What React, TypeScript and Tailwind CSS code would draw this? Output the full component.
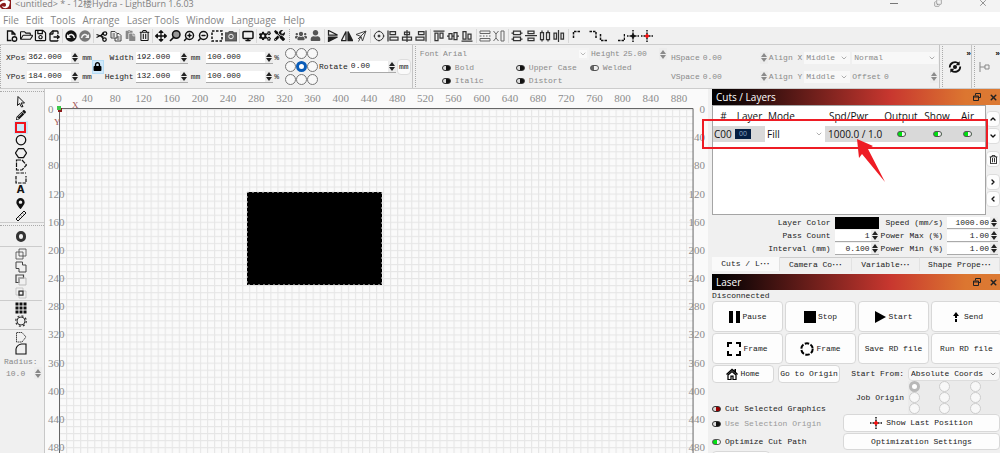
import { useState } from "react";
import type { ReactNode } from "react";
import { Camera, ChevronDown, ChevronLeft, ChevronRight, ChevronUp, Copy, FileOutput, Monitor, X, ZoomIn, ZoomOut } from "lucide-react";
import { FaCogs, FaLock, FaMapMarkerAlt, FaPaste, FaRegFolderOpen, FaRegSave, FaRegTrashAlt, FaTools, FaUser, FaUsers, FaArrowsAlt, FaPencilAlt } from "react-icons/fa";

const UI = "font-['Open_Sans','Noto_Sans_CJK_SC',sans-serif]";

interface Tool {
  label: string;
  icon: ReactNode;
}

// Small line icon on a 24 unit grid
function Line({ d, w = 2.5, color = "currentColor", dash, children }: { d: string; w?: number; color?: string; dash?: string; children?: ReactNode }) {
  return (
    <svg viewBox="0 0 24 24" className="size-3" fill="none" stroke={color} strokeWidth={w} strokeDasharray={dash}>
      <path d={d} />
      {children}
    </svg>
  );
}

function Cross({ dot, size = "size-3" }: { dot: string; size?: string }) {
  return (
    <svg viewBox="0 0 24 24" className={size} fill="none" stroke="#111" strokeWidth="3">
      <path d="M12 0v3M12 5v4M12 15v4M12 21v3M0 12h3M5 12h4M15 12h4M21 12h3" />
      <circle cx="12" cy="12" r="3" fill={dot} stroke={dot} strokeWidth="2" />
    </svg>
  );
}

const disc = (color: string, flip: boolean) => (
  <svg viewBox="0 0 24 24" className="size-3">
    <circle cx="12" cy="12" r="11.5" fill={color} />
    <g fill="none" stroke="#f0f0f0" strokeWidth="3" transform={flip ? "translate(24 0) scale(-1 1)" : undefined}>
      <path d="M7 12c3-5 10-4 12 4" />
      <path d="M4 8v8h8z" fill="#f0f0f0" stroke="none" />
    </g>
  </svg>
);

const fileTools: Tool[][] = [
  [
    {
      label: "New",
      icon: (
        <Line d="M11 21H3V2h9l6 6v3M12 2v6h6" w={2.6}>
          <circle cx="17" cy="18" r="4.500" />
        </Line>
      ),
    },
    { label: "Open", icon: <FaRegFolderOpen size={13} /> },
    { label: "Save", icon: <FaRegSave size={13} /> },
    { label: "Import", icon: <FileOutput size={12} strokeWidth={2.6} className="-scale-x-100" /> },
  ],
  [
    { label: "Undo", icon: disc("#111", false) },
    { label: "Redo", icon: disc("#777", true) },
  ],
  [
    {
      label: "Cut",
      icon: (
        <Line d="M1 9l14 5M1 15L15 8M8 12h4">
          <path d="M11 13l4 5M11 11l3-6" />
          <circle cx="18" cy="7" r="3.500" />
          <circle cx="17" cy="19" r="3.500" />
        </Line>
      ),
    },
    { label: "Copy", icon: <Line d="M2 3h8l4 4v9H2zM10 16v6h12V11l-4-4h-4M5 8h5M5 12h5M14 14h5M14 18h5" w={2} color="#444" /> },
    { label: "Paste", icon: <FaPaste size={11} className="text-[#888]" /> },
    { label: "Delete", icon: <FaRegTrashAlt size={11} /> },
  ],
  [
    { label: "Pan", icon: <FaArrowsAlt size={12} /> },
    {
      label: "Zoom to page",
      icon: (
        <Line d="M10 14L2 22" w={3.5}>
          <circle cx="14.500" cy="9" r="7.500" fill="#999" strokeWidth="3" />
        </Line>
      ),
    },
    { label: "Zoom in", icon: <ZoomIn size={12} strokeWidth={3} className="-scale-x-100" /> },
    { label: "Zoom out", icon: <ZoomOut size={12} strokeWidth={3} className="-scale-x-100" /> },
    { label: "Frame selection", icon: <Line d="M2 2h20v20H2z" w={3} dash="5 3" /> },
    {
      label: "Camera",
      icon: (
        <Line d="M1 6h6l2-3h6l2 3h6v15H1z" color="#555">
          <path d="M1 6h6l2-3h6l2 3h6v15H1z" fill="#666" />
          <circle cx="12" cy="13" r="4.500" stroke="#eee" strokeWidth="2" />
        </Line>
      ),
    },
  ],
  [{ label: "Preview", icon: <Monitor size={12} strokeWidth={3} /> }],
  [
    { label: "Settings", icon: <FaCogs size={12} /> },
    { label: "Device settings", icon: <FaTools size={11} /> },
  ],
];

const arrangeTools: Tool[][] = [
  [
    { label: "Group", icon: <FaUsers size={12} className="text-[#555]" /> },
    { label: "Ungroup", icon: <FaUser size={11} className="text-[#555]" /> },
  ],
  [
    {
      label: "Flip vertical",
      icon: (
        <Line d="M3 1l18 9H3z" color="#222">
          <path d="M3 23l18-9H3z" fill="#222" />
        </Line>
      ),
    },
    {
      label: "Flip horizontal",
      icon: (
        <Line d="M10 3v18H1z" color="#222">
          <path d="M14 3v18h9z" fill="#222" />
        </Line>
      ),
    },
    { label: "Mirror", icon: <Line d="M2 9L22 2 15 22l-3-9zM22 2L6 18M12 13L7 23" w={2} color="#444" /> },
  ],
  [
    {
      label: "Align centers",
      icon: (
        <Line d="M12 1v3M12 20v3M1 12h3M20 12h3" w={2} color="#333">
          <circle cx="12" cy="12" r="9" />
          <circle cx="12" cy="12" r="2" fill="#333" />
        </Line>
      ),
    },
    { label: "Align left", icon: <Line d="M2 1v22M6 3h11v6H6zM6 14h16v6H6z" color="#333" /> },
    { label: "Align center", icon: <Line d="M12 0v24M7 4h10v5H7zM3 14h18v6H3z" color="#333" /> },
    { label: "Align right", icon: <Line d="M22 1v22M7 3h11v6H7zM2 14h16v6H2z" color="#333" /> },
  ],
  [
    { label: "Align top", icon: <Line d="M1 2h22M4 6h6v15H4zM14 6h6v10h-6z" color="#333" /> },
    { label: "Align middle", icon: <Line d="M0 12h4M10 12h4M20 12h4M4 7h6v11H4zM14 5h6v14h-6z" color="#333" /> },
    { label: "Align bottom", icon: <Line d="M1 22h22M4 3h6v15H4zM14 8h6v10h-6z" color="#333" /> },
  ],
  [
    { label: "Same width", icon: <Line d="M2 2h20v5H2zM2 17h20v5H2zM1 12h4M8 12h3M14 12h3M20 12h3" w={2} color="#666" /> },
    { label: "Same height", icon: <Line d="M1 2l5 6 5-6M1 22l5-6 5 6M6 8v8M16 2h6v20h-6z" w={2} color="#666" /> },
  ],
  [
    { label: "Distribute vertical", icon: <Line d="M1 6h4M19 6h4M5 2h14v7H5zM1 18h4M19 18h4M5 14h14v7H5z" color="#333" /> },
    { label: "Space vertical", icon: <Line d="M0 11h24M6 2h12v5H6zM6 16h12v5H6z" color="#333" /> },
    { label: "Distribute horizontal", icon: <Line d="M6 1v4M6 19v4M3 5h6v14H3zM18 1v4M18 19v4M15 5h6v14h-6z" color="#333" /> },
    { label: "Space horizontal", icon: <Line d="M11 0v24M2 6h5v12H2zM16 6h5v12h-5z" color="#333" /> },
  ],
  [
    { label: "Move to top left", icon: <Line d="M5 16V3h15" w={3} dash="5 2" /> },
    { label: "Move to top right", icon: <Line d="M9 3h13v14" w={3} dash="5 2" /> },
    { label: "Move to bottom left", icon: <Line d="M3 8v13h14" w={3} dash="5 2" /> },
    { label: "Move to bottom right", icon: <Line d="M23 8v13H9" w={3} dash="5 2" /> },
    { label: "Move to center", icon: <Cross dot="#111" /> },
    { label: "Move laser to center", icon: <Cross dot="#f01010" /> },
  ],
];

const drawTools: Tool[] = [
  { label: "Select", icon: <Line d="M6 1l13 13h-7l4 7-3 1-4-7-4 4z" w={2} /> },
  { label: "Draw lines", icon: <FaPencilAlt size={10} /> },
  { label: "Rectangle", icon: <span className="block size-[11px] border-2 border-[#f0141e] bg-[#cce8f8]" /> },
  {
    label: "Ellipse",
    icon: (
      <Line d="">
        <circle cx="12" cy="12" r="9.500" />
      </Line>
    ),
  },
  { label: "Polygon", icon: <Line d="M7 3h10l6 9-6 9H7l-6-9z" /> },
  { label: "Edit nodes", icon: <Line d="M3 2h11l9 10-9 10H3z" w={2.4} dash="9 2" /> },
  { label: "Edit tabs", icon: <Line d="M2 8v14h20V8M2 2h20" w={2.4} dash="7 2" /> },
  { label: "Text", icon: <span className="font-['DejaVu_Sans',sans-serif] text-[10px] font-bold">A</span> },
  { label: "Position laser", icon: <FaMapMarkerAlt size={11} /> },
  { label: "Measure", icon: <Line d="M2 18L18 2l4 4L6 22zM8 15l2 2M12 11l2 2M16 7l2 2" w={2} /> },
];

const booleanTools: Tool[] = [
  { label: "Weld", icon: <Line d="M8 2h14v14h-6v6H2V8h6zM8 8h8v8H8z" w={1.6} color="#444" /> },
  { label: "Union", icon: <Line d="M2 2h13v6h7v14H8v-7H2z" w={2} color="#444" /> },
  {
    label: "Subtract",
    icon: (
      <Line d="M2 2h15v6H8v9H2z" w={2.4} color="#444">
        <path d="M8 8h14v14H8z" stroke="#bbb" strokeWidth="2" />
      </Line>
    ),
  },
  {
    label: "Intersection",
    icon: (
      <Line d="M2 2h14v14H2zM8 8h14v14H8z" w={1.6} color="#bbb">
        <path d="M8 8h8v8H8z" stroke="#333" strokeWidth="2.500" />
      </Line>
    ),
  },
];

const arrayTools: Tool[] = [
  { label: "Grid array", icon: <Line d="M1 4h6M9 4h6M17 4h6M1 12h6M9 12h6M17 12h6M1 20h6M9 20h6M17 20h6" w={6} /> },
  {
    label: "Circular array",
    icon: (
      <Line d="" color="#333">
        <circle cx="12" cy="12" r="8" strokeWidth="2" />
        <circle cx="12" cy="12" r="10.500" strokeWidth="2.500" strokeDasharray="4 4.200" />
      </Line>
    ),
  },
];

const cornerTools: Tool[] = [
  { label: "Start point", icon: <Line d="M3 22V3h11l8 9-8 10z" w={2} dash="3 1" color="#444" /> },
  { label: "Radius tool", icon: <Line d="M2 22V12C3 6 8 3 13 2h9v20z" w={2.2} /> },
];

function ToolButton({ tool, className = "h-3.5 w-3.5" }: { tool: Tool; className?: string }) {
  return (
    <button aria-label={tool.label} className={`flex shrink-0 items-center justify-center ${className}`}>
      {tool.icon}
    </button>
  );
}

function ToolGroups({ groups, sep = "ml-px" }: { groups: Tool[][]; sep?: string }) {
  return groups.map((group, i) => (
    <div key={i} className={`flex items-center ${i > 0 ? `border-l border-[#d8d8d8] pl-px ${sep}` : ""}`}>
      {group.map((tool) => (
        <ToolButton key={tool.label} tool={tool} />
      ))}
    </div>
  ));
}

function Grip() {
  return <div className="w-px shrink-0 self-stretch border-l border-dotted border-[#aaa]" />;
}

function Spinner() {
  return (
    <span className="flex w-2 shrink-0 flex-col items-center justify-center gap-px bg-[#ececec]">
      <button aria-label="Increase" className="h-0 w-0 border-x-[3px] border-b-[4px] border-x-transparent border-b-current" />
      <button aria-label="Decrease" className="h-0 w-0 border-x-[3px] border-t-[4px] border-x-transparent border-t-current" />
    </span>
  );
}

interface FieldProps {
  label: string;
  value: string;
  className?: string;
  align?: string;
  muted?: boolean;
  hideLabel?: boolean;
}

function Field({ label, value, className = "w-[52px]", align = "", muted, hideLabel }: FieldProps) {
  return (
    <label className="flex items-center justify-end gap-0.5">
      {!hideLabel && <span className="whitespace-nowrap">{label}</span>}
      <span className={`flex h-3 ${muted ? "" : "border-b border-[#aaa] bg-white"} ${className}`}>
        <input aria-label={label} defaultValue={value} disabled={muted} className={`min-w-0 flex-1 bg-transparent px-px ${align}`} />
        <Spinner />
      </span>
    </label>
  );
}

function Dropdown({ label, options, className, icon = "text-[#888]" }: { label: string; options: string[]; className: string; icon?: string }) {
  return (
    <span className={`relative flex items-center ${className}`}>
      <select aria-label={label} className="h-full w-full appearance-none px-0.5">
        {options.map((o) => (
          <option key={o}>{o}</option>
        ))}
      </select>
      <ChevronDown size={8} className={`pointer-events-none absolute right-0.5 ${icon}`} />
    </span>
  );
}

const toggleFill = {
  on: "border-[#555] bg-[linear-gradient(90deg,#00e010_55%,#f4f4f4_55%)]",
  off: "border-[#333] bg-[linear-gradient(90deg,#ddd_45%,#111_45%)]",
  red: "border-[#333] bg-[linear-gradient(90deg,#ddd_45%,#900_45%)]",
  hollow: "border-[#555] bg-[linear-gradient(90deg,#666_45%,#eee_45%)]",
};

function Toggle({ label, look, showLabel = true, className = "" }: { label: string; look: keyof typeof toggleFill; showLabel?: boolean; className?: string }) {
  return (
    <label className={`flex items-center gap-1 whitespace-nowrap ${className}`}>
      <input type="checkbox" aria-label={label} defaultChecked={look === "on"} className={`h-1.5 w-[9px] shrink-0 appearance-none rounded-[3px] border ${toggleFill[look]}`} />
      {showLabel && <span>{label}</span>}
    </label>
  );
}

function AnchorGrid({ name, selected, className, dot }: { name: string; selected: number; className: string; dot: string }) {
  return (
    <div role="radiogroup" aria-label={name} className={`grid grid-cols-3 ${className}`}>
      {Array.from({ length: 9 }, (_, i) => (
        <input key={i} type="radio" name={name} aria-label={`${name} ${i + 1}`} defaultChecked={i === selected} className={`size-[11px] appearance-none rounded-full border bg-[#f8f8f8] checked:border-[3px] checked:bg-white ${dot}`} />
      ))}
    </div>
  );
}

function PropertiesBar() {
  return (
    <div className="flex h-[45px] shrink-0 items-stretch overflow-hidden border-y border-[#ccc] bg-[#f0f0f0] text-[#222]">
      <Grip />
      <div className="flex shrink-0 flex-col justify-center gap-[7px] pl-[5px] pt-px">
        <div className="flex items-center gap-[3px]"><Field label="XPos" value="362.000" /><span>mm</span></div>
        <div className="flex items-center gap-[3px]"><Field label="YPos" value="184.000" /><span>mm</span></div>
      </div>
      <button aria-label="Lock aspect ratio" className="flex h-3.5 w-3 shrink-0 items-center justify-center self-center border border-[#b5dcf5] bg-[#cfe8fa] text-black">
        <FaLock size={9} />
      </button>
      <div className="flex shrink-0 flex-col items-end justify-center gap-[7px] pl-px pt-px">
        <div className="flex items-center gap-[3px]"><Field label="Width" value="192.000" /><span>mm</span></div>
        <div className="flex items-center gap-[3px]"><Field label="Height" value="132.000" /><span>mm</span></div>
      </div>
      <div className="flex shrink-0 flex-col justify-center gap-[7px] pl-1.5 pt-px">
        <div className="flex items-center gap-px"><Field label="Width percent" hideLabel value="100.000" className="w-[67px]" /><span>%</span></div>
        <div className="flex items-center gap-px"><Field label="Height percent" hideLabel value="100.000" className="w-[67px]" /><span>%</span></div>
      </div>
      <AnchorGrid name="Anchor" selected={4} className="ml-1.5 shrink-0 content-center gap-y-[2px]" dot="border-[#777] checked:border-[#0a5cb8]" />
      <div className="ml-px flex shrink-0 items-center gap-px">
        <Field label="Rotate" value="0.00" className="w-[46px]" />
        <button className="h-4 w-3.5 rounded-sm border border-[#ddd] bg-[#fafafa]">mm</button>
      </div>
      <div className="ml-px w-px shrink-0 bg-[#c4c4c4]" />
      <div className="ml-0.5 flex shrink-0 py-px"><Grip /></div>

      {/* Text options, greyed out while no text is selected */}
      <div className="flex shrink-0 flex-col pl-1 pt-[3px] text-[#8a8a8a]">
        <div className="flex h-3 items-center gap-0.5">
          <span>Font</span>
          <Dropdown label="Font" options={["Arial"]} className="h-3 w-[148px] bg-[#f3f3f3]" icon="bg-[#fafafa] text-[#999]" />
          <Field label="Height" value="25.00" muted className="w-[45px]" />
        </div>
        <div className="mt-0.5 grid grid-cols-[74px_74px_1fr] gap-y-px pl-[22px]">
          <Toggle label="Bold" look="off" />
          <Toggle label="Upper Case" look="off" />
          <Toggle label="Welded" look="hollow" />
          <Toggle label="Italic" look="off" />
          <Toggle label="Distort" look="off" />
        </div>
      </div>
      <div className="ml-1 flex shrink-0 flex-col justify-center gap-[7px] pt-px text-[#8a8a8a]">
        <Field label="HSpace" value="0.00" muted className="w-[66px]" />
        <Field label="VSpace" value="0.00" muted className="w-[66px]" />
      </div>
      <div className="ml-px flex min-w-0 flex-1 flex-col justify-center gap-[7px] pt-px text-[#8a8a8a]">
        <div className="flex items-center gap-0.5">
          <span className="whitespace-nowrap">Align X</span>
          <Dropdown label="Align X" options={["Middle"]} className="h-3 w-[46px] bg-[#f8f8f8]" />
          <Dropdown label="Style" options={["Normal"]} className="h-3 min-w-0 flex-1 bg-[#f8f8f8]" />
        </div>
        <div className="flex items-center gap-0.5">
          <span className="whitespace-nowrap">Align Y</span>
          <Dropdown label="Align Y" options={["Middle"]} className="h-3 w-[46px] bg-[#f8f8f8]" />
          <div className="min-w-0 flex-1"><Field label="Offset" value="0" muted className="min-w-0 flex-1" /></div>
        </div>
      </div>
      <div className="ml-px w-px shrink-0 bg-[#c4c4c4]" />
      <div className="flex w-[31px] shrink-0 py-px pl-0.5">
        <Grip />
        <button aria-label="Sync" className="flex flex-1 items-center justify-center">
          <svg viewBox="0 0 24 24" className="size-3.5" fill="none" stroke="#111" strokeWidth="3">
            <path d="M3 13a9 9 0 0 1 15-7M21 11a9 9 0 0 1-15 7" />
            <path d="M20 2v7h-7zM4 22v-7h7z" fill="#111" stroke="none" />
            <circle cx="12" cy="12" r="2" fill="#111" />
          </svg>
        </button>
        <button aria-label="More" className="self-start pt-0.5 font-bold text-black">»</button>
      </div>
      <div className="w-px shrink-0 bg-[#c4c4c4]" />
      <div className="flex w-7 shrink-0 py-px pl-0.5">
        <Grip />
        <button aria-label="Dock" className="flex flex-1 items-center justify-center">
          <Line d="M2 2v20M2 12h10M12 8h8v8h-8z" w={2} color="#888" />
        </button>
        <button aria-label="More" className="self-start pt-0.5 font-bold text-black">»</button>
      </div>
    </div>
  );
}

function Sidebar() {
  return (
    <aside className="flex w-[45px] shrink-0 flex-col border-r border-[#c8c8c8] bg-[#f0f0f0] text-[#111]">
      <div className="mt-0.5 border-t border-dotted border-[#aaa]" />
      <div className="mt-1 flex h-[126px] flex-col items-center pr-[3px]">
        {drawTools.map((tool) => (
          <ToolButton key={tool.label} tool={tool} className={`w-3.5 flex-1 ${tool.label === "Rectangle" ? "bg-[#cce8f8]" : ""}`} />
        ))}
      </div>
      <div className="border-t border-[#ccc]" />
      <div className="mt-0.5 border-t border-dotted border-[#aaa]" />
      <div className="flex h-5 items-center justify-center pr-[3px]">
        <button aria-label="Offset shapes" className="h-[11px] w-2.5 rounded-[5px] border-[3px] border-[#333]" />
      </div>
      <div className="mr-0.5 flex flex-col items-center gap-px border-t border-[#ccc] py-px">
        {booleanTools.map((tool) => <ToolButton key={tool.label} tool={tool} className="h-3 w-3.5" />)}
      </div>
      <div className="mr-0.5 flex flex-col items-center gap-px border-t border-[#ccc] py-px">
        {arrayTools.map((tool) => <ToolButton key={tool.label} tool={tool} className="h-3 w-3.5" />)}
      </div>
      <div className="mr-0.5 mt-px flex flex-col items-center border-t border-[#ccc] py-px">
        {cornerTools.map((tool) => <ToolButton key={tool.label} tool={tool} className="h-3 w-3.5" />)}
      </div>
      <label className="flex flex-col leading-[11px] text-[#888]">
        <span className="pl-1">Radius:</span>
        <span className="flex h-3 pl-1.5 pr-0.5">
          <input defaultValue="10.0" className="min-w-0 flex-1 bg-transparent" />
          <Spinner />
        </span>
      </label>
    </aside>
  );
}

// Work area: 900 mm wide, drawn at 0.7045 px per mm
const SCALE = 0.7045;
const OX = 14;
const OY = 20;

function Workspace() {
  const xTicks = Array.from({ length: 23 }, (_, i) => i * 40);
  const yTicks = Array.from({ length: 13 }, (_, i) => i * 40);
  const right = OX + 900 * SCALE;
  return (
    <main className="min-w-0 flex-1 overflow-hidden bg-[#fafafa]">
      <svg className="h-full w-full font-['Liberation_Serif',serif] text-[11px]">
        <defs>
          <pattern id="grid" x={OX} y={OY} width={10 * SCALE} height={10 * SCALE} patternUnits="userSpaceOnUse">
            <path d="M0 0.500H8M0.500 0V8" stroke="#e6e6e6" strokeWidth="1.200" fill="none" />
          </pattern>
        </defs>
        <rect x={OX} y={OY} width={900 * SCALE} height="100%" fill="url(#grid)" />
        <path d={`M${OX + 0.5} 600V${OY - 0.5}H${right}V600`} fill="none" stroke="#666" />
        <g fill="#8c8c8c">
          {xTicks.map((t) => (
            <text key={t} x={OX + t * SCALE} y="13" textAnchor="middle">{t}</text>
          ))}
          {yTicks.map((t) => (
            <g key={t}>
              <text x="3" y={OY + 4 + t * SCALE}>{t}</text>
              <text x={right + 12} y={OY + 4 + t * SCALE} textAnchor="end">{t}</text>
            </g>
          ))}
        </g>
        <g fill="#a05050" className="text-[9px]">
          <text x="27" y="19">X</text>
          <text x="9" y="36">Y</text>
        </g>
        <rect x={OX - 1} y={OY - 1} width="4" height="4" fill="#8c1c1c" />
        <rect x={OX - 2} y={OY - 3} width="4" height="4" fill="#3cc84a" />
        <rect x="202" y="103" width="135" height="93" fill="#000" stroke="#ddd" strokeDasharray="2 3" />
      </svg>
    </main>
  );
}

function DockTitle({ children }: { children: ReactNode }) {
  return (
    <div className={`flex h-4 shrink-0 items-center bg-[linear-gradient(90deg,#000,#1a0808_10%,#c8372f_62%,#dc7630_88%,#dc7a34)] pl-1 pr-0.5 text-[10px] text-white ${UI}`}>
      <h2 className="flex-1">{children}</h2>
      <button aria-label="Float" className="mr-2">
        <svg viewBox="0 0 16 16" className="size-2 text-[#222]" fill="none" stroke="currentColor" strokeWidth="2">
          <path d="M5 5V1h10v8h-4M1 6h10v9H1zM1 8h10" />
        </svg>
      </button>
      <button aria-label="Close"><X size={9} strokeWidth={4} className="text-[#222]" /></button>
    </div>
  );
}

function CutsPanel() {
  const [tab, setTab] = useState(0);
  const tabs = ["Cuts / L", "Camera Co", "Variable", "Shape Prope"];
  return (
    <section>
      <DockTitle>Cuts / Layers</DockTitle>
      <div className="relative flex">
        <div className="h-[110px] min-w-0 flex-1 border border-[#a5a5a5] bg-white">
          <table className={`w-full table-fixed text-[10px] text-[#111] ${UI}`}>
            <colgroup>
              <col className="w-[21px]" /><col className="w-[31px]" /><col className="w-[61px]" /><col className="w-[56px]" /><col className="w-[38px]" /><col className="w-[34px]" /><col />
            </colgroup>
            <thead>
              <tr className="h-5">
                <th className="font-normal">#</th>
                <th className="font-normal">Layer</th>
                <th className="pl-[3px] text-left font-normal">Mode</th>
                <th className="pl-[3px] text-left font-normal">Spd/Pwr</th>
                <th className="font-normal">Output</th>
                <th className="font-normal">Show</th>
                <th className="pr-1 font-normal">Air</th>
              </tr>
            </thead>
            <tbody>
              <tr className="h-4 bg-[#d9d9d9]">
                <td className="whitespace-nowrap pl-px">C00</td>
                <td><span className="ml-px block h-2.5 w-4 bg-[#041e42] text-center text-[7px] leading-[10px] text-[#8ba6c8]">00</span></td>
                <td><Dropdown label="Mode" options={["Fill", "Line"]} className="h-4 w-[60px] bg-white" /></td>
                <td className="whitespace-nowrap pl-0.5">1000.0 / 1.0</td>
                <td><Toggle label="Output" look="on" showLabel={false} className="justify-center" /></td>
                <td><Toggle label="Show" look="on" showLabel={false} className="justify-center" /></td>
                <td><Toggle label="Air" look="on" showLabel={false} className="justify-center pr-1" /></td>
              </tr>
            </tbody>
          </table>
        </div>
        <div className="flex w-3.5 shrink-0 flex-col gap-px overflow-hidden pt-1.5 text-[#111]">
          <button aria-label="Move up" className="flex h-4 items-center justify-center rounded-sm border border-[#ddd] bg-[#fdfdfd]"><ChevronUp size={8} strokeWidth={4} /></button>
          <button aria-label="Move down" className="flex h-4 items-center justify-center rounded-sm border border-[#ddd] bg-[#fdfdfd]"><ChevronDown size={8} strokeWidth={4} /></button>
          <button aria-label="Delete layer" className="mt-1.5 flex h-4 items-center justify-center rounded-sm border border-[#ddd] bg-[#fdfdfd]"><FaRegTrashAlt size={9} /></button>
          <button aria-label="Next" className="mt-1.5 flex h-4 items-center justify-center rounded-sm border border-[#ddd] bg-[#fdfdfd]"><ChevronRight size={8} strokeWidth={4} /></button>
          <button aria-label="Previous" className="flex h-4 items-center justify-center rounded-sm border border-[#ddd] bg-[#fdfdfd]"><ChevronLeft size={8} strokeWidth={4} /></button>
        </div>

        {/* Callout over the layer row */}
        <div className="pointer-events-none absolute -left-2.5 right-3 top-3.5 h-[30px] border-2 border-[#ee1c24]" />
        <svg className="pointer-events-none absolute left-[145px] top-[33px] h-[46px] w-[30px]" fill="#ee1c24">
          <path d="M0 1L16 8L11 11L28 44L5 16L2 20Z" />
        </svg>
      </div>

      <div className="mt-0.5 grid grid-cols-[1fr_auto] gap-x-0.5 pr-0.5 text-[#222]">
        <div className="flex flex-col gap-px">
          <label className="flex h-3 items-center justify-end gap-1">
            <span>Layer Color</span>
            <button aria-label="Layer Color" className="h-3 w-11 bg-black" />
          </label>
          <Field label="Pass Count" value="1" align="text-right" className="ml-0.5 w-11" />
          <Field label="Interval (mm)" value="0.100" align="text-right" className="ml-0.5 w-11" />
        </div>
        <div className="flex flex-col gap-px">
          <Field label="Speed (mm/s)" value="1000.00" align="text-right" className="ml-0.5 w-[51px]" />
          <Field label="Power Max (%)" value="1.00" align="text-right" className="ml-0.5 w-[51px]" />
          <Field label="Power Min (%)" value="1.00" align="text-right" className="ml-0.5 w-[51px]" />
        </div>
      </div>
      <div role="tablist" className="mt-0.5 grid grid-cols-[68px_72px_68px_1fr] text-[#222]">
        {tabs.map((t, i) => (
          <button key={t} role="tab" aria-selected={tab === i} onClick={() => setTab(i)} className={`flex h-3.5 items-center justify-center whitespace-nowrap border-r border-[#e2e2e2] ${tab === i ? "bg-[#fafafa]" : "border-t border-t-[#ccc] bg-[#f0f0f0]"}`}>
            {t}<span className="font-['Noto_Sans_CJK_SC',sans-serif] text-[10px]">…</span>
          </button>
        ))}
      </div>
    </section>
  );
}

const BTN = "flex items-center justify-center gap-0.5 whitespace-nowrap rounded-sm border border-[#d8d8d8] bg-[#fdfdfd]";

function LaserPanel() {
  return (
    <section className="mt-[3px] flex flex-col text-[#222]">
      <DockTitle>Laser</DockTitle>
      <p className="h-[11px]">Disconnected</p>
      <div className="-mr-0.5 grid grid-cols-4 gap-x-0.5 gap-y-px">
        <button className={`${BTN} h-[31px]`}>
          <svg viewBox="0 0 12 12" className="size-3"><path d="M1 0h4v12H1zM8 0h4v12H8z" /></svg>Pause
        </button>
        <button className={`${BTN} h-[31px]`}>
          <svg viewBox="0 0 12 12" className="size-3"><path d="M0 0h12v12H0z" /></svg>Stop
        </button>
        <button className={`${BTN} h-[31px]`}>
          <svg viewBox="0 0 12 12" className="size-3"><path d="M1 0l11 6-11 6z" /></svg>Start
        </button>
        <button className={`${BTN} h-[31px]`}>
          <svg viewBox="0 0 12 12" className="size-3"><path d="M6 1l3 4H7v2H5V5H3zM5 8h2v3H5z" /></svg>Send
        </button>
        <button className={`${BTN} h-[31px]`}>
          <svg viewBox="0 0 14 14" className="size-3.5" fill="none" stroke="#000" strokeWidth="2"><path d="M1 5V1h4M9 1h4v4M13 9v4H9M5 13H1V9" /></svg>Frame
        </button>
        <button className={`${BTN} h-[31px]`}>
          <svg viewBox="0 0 14 14" className="size-3.5" fill="none" stroke="#000" strokeWidth="2"><circle cx="7" cy="7" r="5.700" strokeDasharray="4.500 1.470" /></svg>Frame
        </button>
        <button className={`${BTN} h-[31px]`}>Save RD file</button>
        <button className={`${BTN} h-[31px]`}>Run RD file</button>
      </div>

      <div className="mt-px grid grid-cols-[128px_1fr] gap-x-[3px]">
        <div>
          <div className="grid grid-cols-2 gap-x-1">
            <button className={`${BTN} h-[18px]`}>
              <svg viewBox="0 0 24 24" className="size-3">
                <path d="M12 1L0 12l2 2L12 5l10 9 2-2-4-4V2h-3v3z" />
                <path d="M4 14l8-7 8 7v9h-6v-7h-4v7H4z" fill="none" stroke="#000" strokeWidth="2.500" />
              </svg>
              Home
            </button>
            <button className={`${BTN} h-[18px]`}>Go to Origin</button>
          </div>
          <div className="mt-5 flex flex-col">
            <Toggle label="Cut Selected Graphics" look="red" />
            <Toggle label="Use Selection Origin" look="off" className="mt-[3px] text-[#999]" />
            <Toggle label="Optimize Cut Path" look="on" className="mt-1.5" />
          </div>
          <button aria-label="More options" className={`${BTN} mt-[3px] h-3 w-[58px]`} />
        </div>
        <div>
          <div className="flex h-4 items-center justify-end gap-1 pt-0.5">
            <span>Start From:</span>
            <Dropdown label="Start From" options={["Absolute Coords"]} className="h-3.5 w-[92px] rounded-sm border border-[#ddd] bg-[#f8f8f8]" icon="text-[#444]" />
          </div>
          <div className="flex items-center justify-end gap-1">
            <span>Job Origin</span>
            <AnchorGrid name="Job Origin" selected={0} className="h-[33px] w-[92px] content-center justify-items-start bg-[#ebebeb] pl-px" dot="border-[#ccc] checked:border-[#b8b8b8]" />
          </div>
          <button className={`${BTN} h-[18px] w-full gap-1`}><Cross dot="#f01010" />Show Last Position</button>
          <button className={`${BTN} mt-px h-[17px] w-full`}>Optimization Settings</button>
        </div>
      </div>
    </section>
  );
}

const menus = ["File", "Edit", "Tools", "Arrange", "Laser Tools", "Window", "Language", "Help"];

export default function App() {
  return (
    <div className="flex h-screen flex-col overflow-hidden bg-[#f0f0f0] font-['Liberation_Mono',monospace] text-[8px] leading-[12px]">
      <header className={`flex h-3 shrink-0 items-end overflow-hidden bg-[#f3f3f3] text-[#808080] ${UI}`}>
        <svg viewBox="0 0 12 12" className="size-3 shrink-0">
          <path d="M0 0h11v9H2L0 7z" fill="#8c1a1c" />
          <path d="M0 5c3-3 6-3 6 0 0 2-2 2-4 1 1 3 5 3 7 0L10 2C8-1 3 0 0 2z" fill="#fff" />
        </svg>
        <h1 className="flex-1 pl-[3px] text-[9px] leading-[16px]">&lt;untitled&gt; * - 12楼Hydra - LightBurn 1.6.03</h1>
        <div className="flex h-[18px] items-center gap-9 pr-3">
          <button aria-label="Minimize" className="h-px w-2 bg-[#777]" />
          <button aria-label="Restore"><Copy size={8} className="-scale-y-100" /></button>
          <button aria-label="Close"><X size={10} /></button>
        </div>
      </header>
      <nav className={`flex h-[15px] shrink-0 items-center gap-[7px] bg-white pl-[3px] text-[10px] text-[#868686] ${UI}`}>
        {menus.map((m) => (
          <button key={m}>{m}</button>
        ))}
      </nav>
      <div className="flex h-[17px] shrink-0 items-center overflow-hidden bg-[#f0f0f0] pl-[5px] text-[#111]">
        <ToolGroups groups={fileTools} />
        <div className="ml-[3px] mr-1 flex self-stretch py-0.5"><Grip /></div>
        <ToolGroups groups={arrangeTools} sep="ml-0.5" />
      </div>
      <PropertiesBar />
      <div className="flex min-h-0 flex-1">
        <Sidebar />
        <Workspace />
        <aside className="w-[292px] shrink-0 pl-1">
          <CutsPanel />
          <LaserPanel />
        </aside>
      </div>
    </div>
  );
}
